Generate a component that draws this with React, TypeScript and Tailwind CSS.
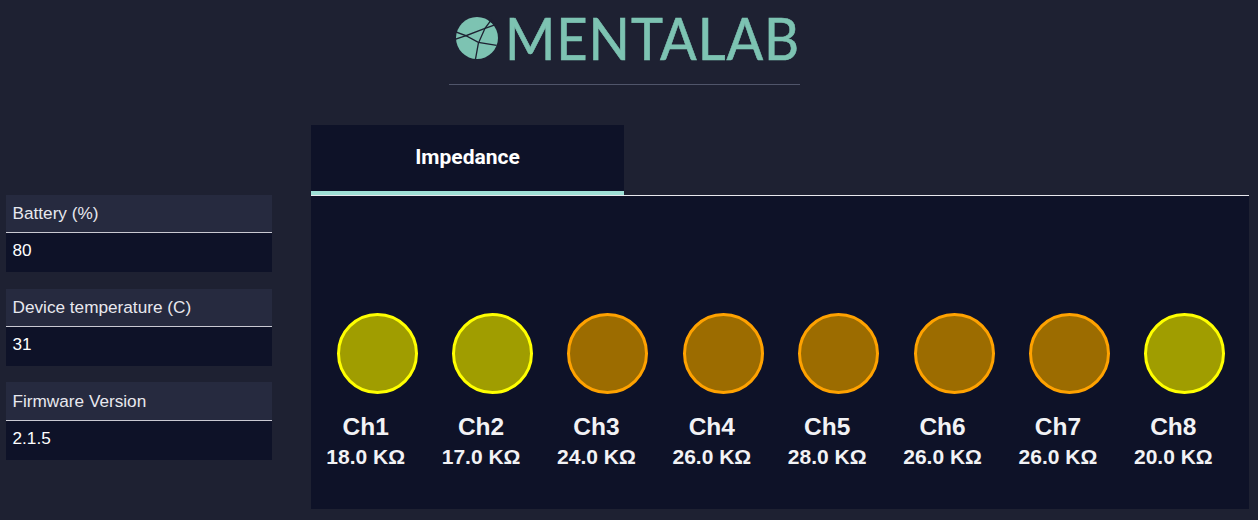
import React from 'react';

const SIDE = "font-['Liberation_Sans',Arial,sans-serif]";

const stats = [
  { label: 'Battery (%)', value: '80' },
  { label: 'Device temperature (C)', value: '31' },
  { label: 'Firmware Version', value: '2.1.5' },
];

const channels = [
  { name: 'Ch1', value: '18.0 KΩ', warn: false },
  { name: 'Ch2', value: '17.0 KΩ', warn: false },
  { name: 'Ch3', value: '24.0 KΩ', warn: true },
  { name: 'Ch4', value: '26.0 KΩ', warn: true },
  { name: 'Ch5', value: '28.0 KΩ', warn: true },
  { name: 'Ch6', value: '26.0 KΩ', warn: true },
  { name: 'Ch7', value: '26.0 KΩ', warn: true },
  { name: 'Ch8', value: '20.0 KΩ', warn: false },
];

// brain / globe mark of the logo
const LogoMark = () => (
  <svg width="42" height="42" viewBox="18 39 126 126" className="shrink-0">
    <circle cx="81" cy="102" r="63" fill="#7dc3b2" />
    <g fill="none" stroke="#1e2132" strokeWidth="4">
      <path d="M15 83 48 95 105 73 148 58" />
      <path d="M15 106 48 95 85 115 140 124" />
      <path d="M131 38 105 73 85 118 76 168" />
      <path d="M116 48 140 64" />
    </g>
  </svg>
);

const StatCard = ({ label, value }: { label: string; value: string }) => (
  <div className="text-[17.2px] leading-[20px]">
    <div className="h-[38.4px] border-b border-[#c9c9d2] bg-[#262a3f] pl-[6.5px] pt-[8.3px] text-[#e8e8ee]">{label}</div>
    <div className="h-[39px] bg-[#0e1228] pl-[6.5px] pt-[7px] text-white">{value}</div>
  </div>
);

const Channel = ({ name, value, warn }: { name: string; value: string; warn: boolean }) => (
  <div className="flex flex-col items-center">
    <div
      className={`size-[81px] rounded-full border-[3px] ${
        warn ? 'border-[#ffa200] bg-[#9c6c00]' : 'border-[#ffff00] bg-[#a09d00]'
      }`}
    />
    <div className="mt-[19px] w-full pr-[23px] text-center font-bold text-[#f2f2f5]">
      <div className="text-[24.5px] leading-[28px]">{name}</div>
      <div className="mt-[4px] text-[21px] leading-[24px] whitespace-nowrap">{value}</div>
    </div>
  </div>
);

export default function App() {
  return (
    <div className={`${SIDE} h-[520px] w-[1258px] overflow-hidden bg-[#1e2132]`}>
      <header className="ml-[449px] w-[351px] border-b border-[#50556a] pt-[17px] pb-[25px] pl-[7px]">
        <div className="flex h-[42px] items-center gap-[7px]">
          <LogoMark />
          <span className="inline-block origin-left scale-x-[0.935] font-['Lato',sans-serif] text-[58px] leading-[42px] font-normal tracking-[1px] text-[#7dc3b2] [-webkit-text-stroke:0.6px_#7dc3b2]">
            MENTALAB
          </span>
        </div>
      </header>

      <main className="mt-[40px] flex">
        <aside className="mt-[70px] ml-[6px] flex w-[266px] flex-col gap-[16.3px]">
          {stats.map((s) => (
            <StatCard key={s.label} label={s.label} value={s.value} />
          ))}
        </aside>

        <section className="ml-[39px] w-[938px]">
          <div className="border-b border-[#e8e8ee]">
            <div className="flex h-[70px] w-[313px] items-center justify-center border-b-[4px] border-[#9fe0d6] bg-[#0e1228] font-['Roboto',sans-serif] text-[21px] font-bold text-white">
              Impedance
            </div>
          </div>
          <div className="h-[313px] bg-[#0e1228] pt-[117px] pr-[6.5px] pl-[8.5px]">
            <div className="grid grid-cols-8">
              {channels.map((c) => (
                <Channel key={c.name} name={c.name} value={c.value} warn={c.warn} />
              ))}
            </div>
          </div>
        </section>
      </main>
    </div>
  );
}
